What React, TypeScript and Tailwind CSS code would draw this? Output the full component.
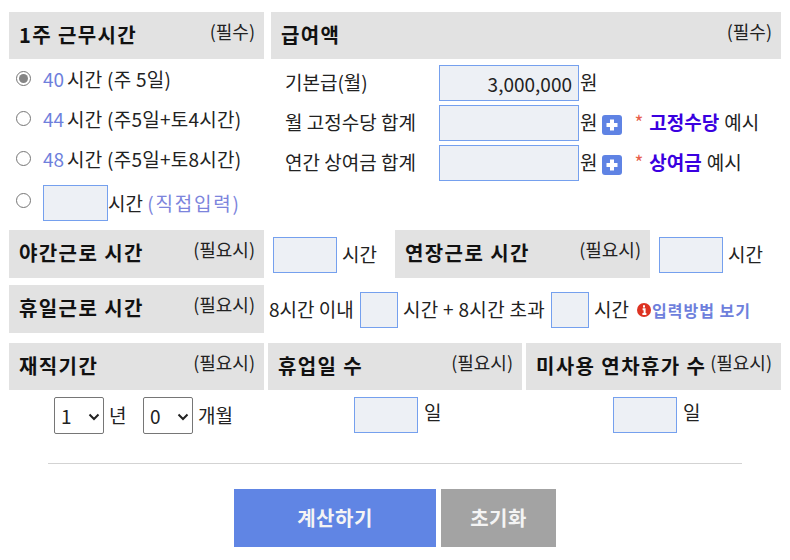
import React from 'react';

const FONT = "font-['Noto_Sans_CJK_KR','Liberation_Sans',sans-serif]";

const Head: React.FC<{ title: string; note: string; className: string }> = ({ title, note, className }) => (
  <div className={`flex justify-between bg-[#e2e2e2] pl-[10px] pr-[9px] ${className}`}>
    <span className="mt-[8px] text-[20px] leading-[29px] font-bold tracking-[1.4px] text-[#111] whitespace-nowrap">{title}</span>
    <span className="mt-[6px] text-[18px] leading-[26px] text-[#222] whitespace-nowrap">{note}</span>
  </div>
);

const Box: React.FC<{ className?: string; value?: string }> = ({ className = 'w-[64px]', value }) => (
  <input
    readOnly
    value={value ?? ''}
    className={`h-[36px] shrink-0 border border-[#75a0ee] bg-[#edf0f5] px-[6px] text-right text-[19px] text-[#222] outline-none ${className}`}
  />
);

const Radio: React.FC<{ checked?: boolean; className?: string }> = ({ checked, className }) => (
  <span className={`flex h-[15px] w-[15px] shrink-0 items-center justify-center rounded-full border border-[#767676] bg-white ${className ?? ''}`}>
    {checked && <span className="h-[9px] w-[9px] rounded-full bg-[#858585]" />}
  </span>
);

const Plus = () => (
  <svg width="20" height="20" viewBox="0 0 20 20" className="block shrink-0">
    <rect width="20" height="20" rx="3" fill="#5f83e4" />
    <path d="M10 4.5v11M4.5 10h11" stroke="#fff" strokeWidth="4" />
  </svg>
);

const HourOption: React.FC<{ hours: string; detail: string; checked?: boolean }> = ({ hours, detail, checked }) => (
  <div className="flex h-[40px] items-center pl-[7px]">
    <Radio checked={checked} className="-mt-[3px]" />
    <span className="ml-[12px] -mt-[3px] text-[#6e7fdc]">{hours}</span>
    <span className="ml-[3px] -mt-[3px] tracking-[0.25px]">시간 {detail}</span>
  </div>
);

const PayRow: React.FC<{ label: string; value?: string; children?: React.ReactNode }> = ({ label, value, children }) => (
  <div className="flex h-[40px] items-center">
    <span className="-mt-[2px] w-[168px] pl-[14px] whitespace-nowrap">{label}</span>
    <Box className="w-[140px]" value={value} />
    <span className="ml-[1px] -mt-[2px]">원</span>
    {children}
  </div>
);

const Example: React.FC<{ word: string }> = ({ word }) => (
  <>
    <span className="ml-[5px] mt-[4px]"><Plus /></span>
    <span className="ml-[12px] -mt-[2px] text-[#e8604c]">*</span>
    <span className="ml-[6px] -mt-[2px] font-bold text-[#3a00e0]">{word}</span>
    <span className="ml-[5px] -mt-[2px]">예시</span>
  </>
);

const Pick: React.FC<{ value: string }> = ({ value }) => (
  <span className="relative flex h-[37px] w-[50px] shrink-0 items-center rounded-[2px] border border-[#767676] bg-white pl-[6px]">
    {value}
    <svg width="12" height="8" viewBox="0 0 12 8" className="absolute right-[3px] top-[15px]">
      <path d="M1.5 1.5 6 6l4.5-4.5" fill="none" stroke="#222" strokeWidth="2" />
    </svg>
  </span>
);

export default function App() {
  return (
    <div className={`${FONT} h-[560px] w-[790px] overflow-hidden bg-white pt-[12px] pl-[9px] text-[19px] leading-[26px] text-[#222]`}>
      <div className="flex h-[218px] gap-[7px]">
        <div className="w-[255px]">
          <Head title="1주 근무시간" note="(필수)" className="h-[47px]" />
          <div className="pt-[1px]">
            <HourOption hours="40" detail="(주 5일)" checked />
            <HourOption hours="44" detail="(주5일+토4시간)" />
            <HourOption hours="48" detail="(주5일+토8시간)" />
            <div className="flex items-center pl-[7px] pt-[5px]">
              <Radio className="-mt-[6px]" />
              <span className="ml-[12px]"><Box className="w-[65px]" /></span>
              <span className="whitespace-nowrap">시간 <span className="tracking-[1.8px] text-[#7c84dc]">(직접입력)</span></span>
            </div>
          </div>
        </div>
        <div className="w-[510px]">
          <Head title="급여액" note="(필수)" className="h-[47px]" />
          <div className="pt-[4px]">
            <PayRow label="기본급(월)" value="3,000,000" />
            <PayRow label="월 고정수당 합계"><Example word="고정수당" /></PayRow>
            <PayRow label="연간 상여금 합계"><Example word="상여금" /></PayRow>
          </div>
        </div>
      </div>

      <div className="flex h-[48px] items-center">
        <Head title="야간근로 시간" note="(필요시)" className="h-[48px] w-[255px]" />
        <span className="ml-[9px] mt-[2px]"><Box /></span>
        <span className="ml-[5px] w-[53px]">시간</span>
        <Head title="연장근로 시간" note="(필요시)" className="h-[48px] w-[255px]" />
        <span className="ml-[9px] mt-[2px]"><Box /></span>
        <span className="ml-[5px]">시간</span>
      </div>

      <div className="mt-[7px] flex h-[48px] items-center whitespace-nowrap">
        <Head title="휴일근로 시간" note="(필요시)" className="h-[48px] w-[255px]" />
        <span className="ml-[5px] w-[91px]">8시간 이내</span>
        <span className="mt-[2px]"><Box className="w-[38px]" /></span>
        <span className="ml-[5px] w-[148px] tracking-[0.3px]">시간 + 8시간 초과</span>
        <span className="mt-[2px]"><Box className="w-[38px]" /></span>
        <span className="ml-[5px] w-[43px]">시간</span>
        <svg width="14" height="14" viewBox="0 0 14 14" className="mt-[2px] shrink-0">
          <circle cx="7" cy="7" r="7" fill="#dd3322" />
          <path d="M7 2.2v2.2M5.6 6.2H7.6V11M5.4 11h4" fill="none" stroke="#fff" strokeWidth="2" />
        </svg>
        <span className="ml-[1px] mt-[2px] text-[16px] font-bold tracking-[1px] text-[#6e7fdc]">입력방법 보기</span>
      </div>

      <div className="mt-[10px] flex h-[47px] gap-[4px]">
        <Head title="재직기간" note="(필요시)" className="w-[255px]" />
        <Head title="휴업일 수" note="(필요시)" className="w-[254px]" />
        <Head title="미사용 연차휴가 수" note="(필요시)" className="w-[255px]" />
      </div>
      <div className="flex h-[73px] gap-[4px] pt-[7px]">
        <div className="flex w-[255px] items-start pl-[45px]">
          <Pick value="1" />
          <span className="ml-[5px] w-[34px] leading-[36px]">년</span>
          <Pick value="0" />
          <span className="ml-[5px] leading-[36px]">개월</span>
        </div>
        <div className="flex w-[254px] items-start pl-[86px]">
          <Box />
          <span className="ml-[6px] leading-[30px]">일</span>
        </div>
        <div className="flex w-[255px] items-start pl-[87px]">
          <Box />
          <span className="ml-[6px] leading-[30px]">일</span>
        </div>
      </div>

      <div className="ml-[39px] h-px w-[694px] bg-[#d3d3d3]" />

      <div className="mt-[25px] ml-[225px] flex gap-[5px]">
        <button className="h-[58px] w-[202px] bg-[#6085e4] text-[20px] font-bold tracking-[0.5px] text-[#f4f4f4]">계산하기</button>
        <button className="h-[58px] w-[115px] bg-[#a3a3a3] text-[20px] font-bold tracking-[0.5px] text-[#f4f4f4]">초기화</button>
      </div>
    </div>
  );
}
